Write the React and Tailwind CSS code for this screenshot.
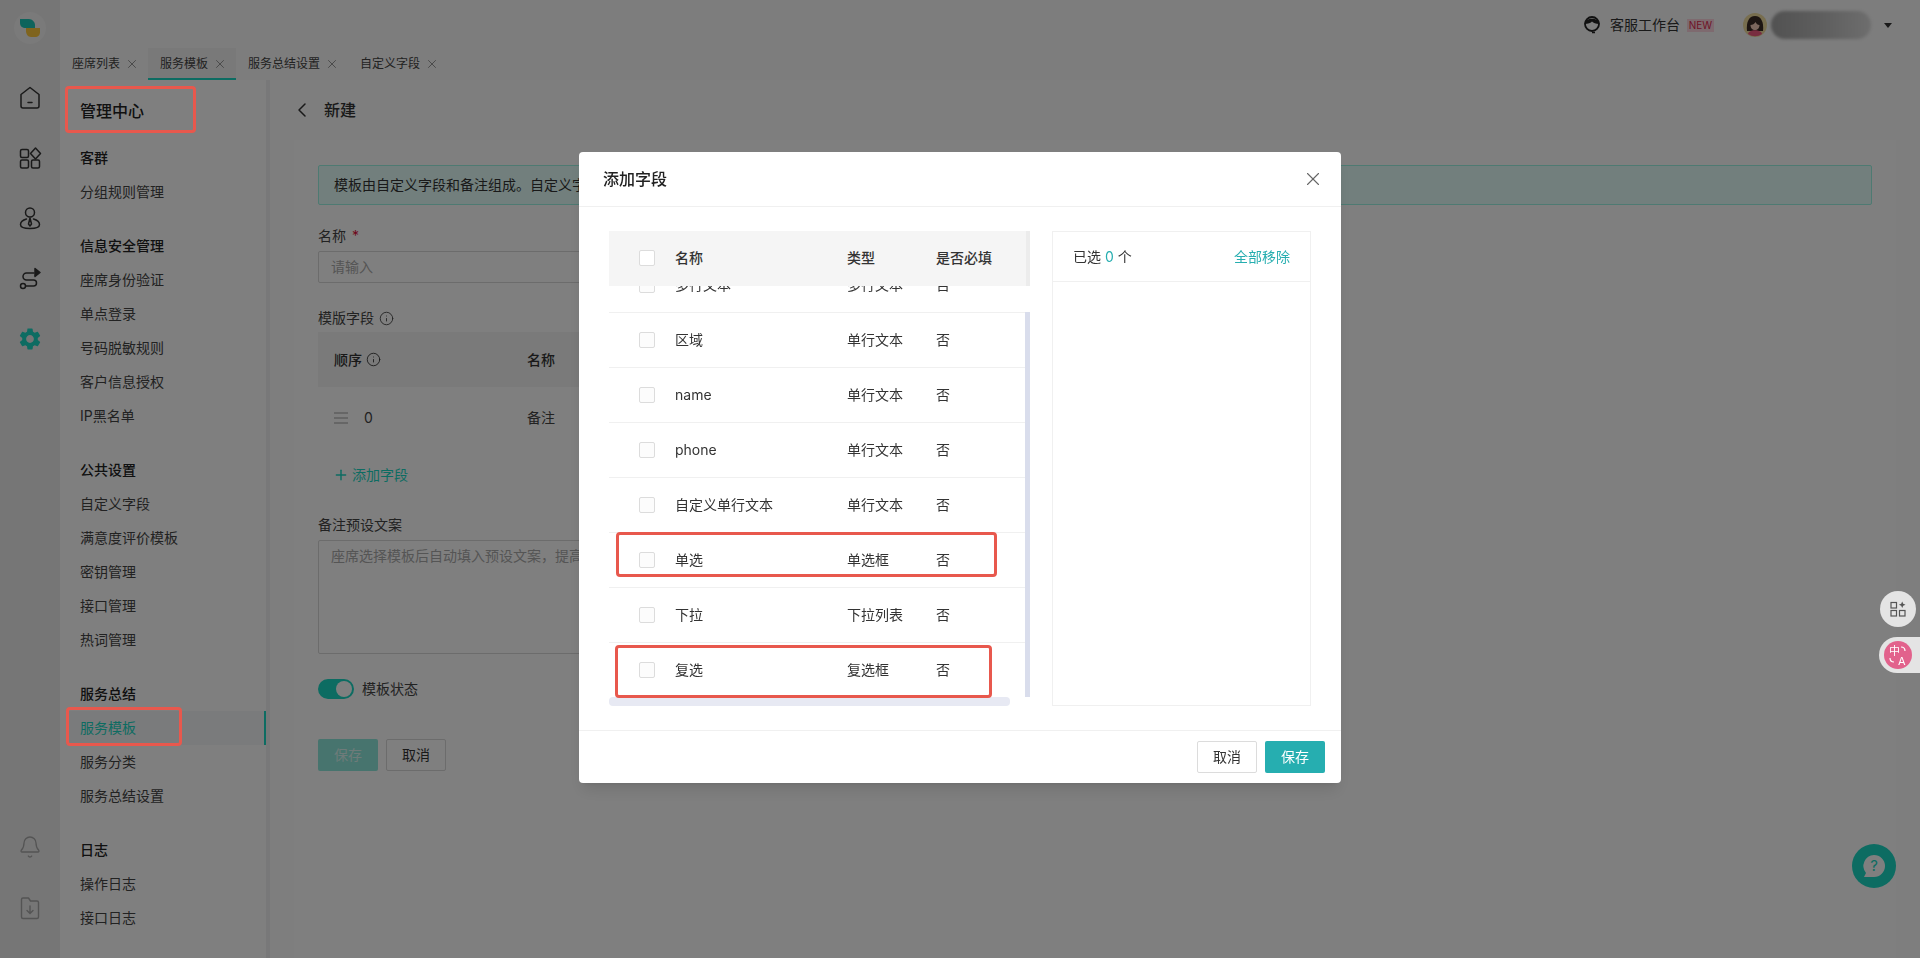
import React from "react";
import { X, ChevronLeft, Info, Plus, Bell } from "lucide-react";
import { MdSettings } from "react-icons/md";

const menu = [
  { title: "客群", items: ["分组规则管理"] },
  { title: "信息安全管理", items: ["座席身份验证", "单点登录", "号码脱敏规则", "客户信息授权", "IP黑名单"] },
  { title: "公共设置", items: ["自定义字段", "满意度评价模板", "密钥管理", "接口管理", "热词管理"] },
  { title: "服务总结", items: ["服务模板", "服务分类", "服务总结设置"] },
  { title: "日志", items: ["操作日志", "接口日志"] },
];

const tabs = ["座席列表", "服务模板", "服务总结设置", "自定义字段"];

const rows = [
  ["多行文本", "多行文本"],
  ["区域", "单行文本"],
  ["name", "单行文本"],
  ["phone", "单行文本"],
  ["自定义单行文本", "单行文本"],
  ["单选", "单选框"],
  ["下拉", "下拉列表"],
  ["复选", "复选框"],
];

const Logo = () => (
  <div className="w-8 h-8 rounded-full bg-[#f4f4f4] flex items-center justify-center">
    <svg width="22" height="20" viewBox="0 0 22 20">
      <path d="M1 1h9c3 0 6 3 6 6v3H7C3 10 1 8 1 5z" fill="#1cc8b8" />
      <path d="M7 10h14v4c0 3-2 5-5 5h-4c-3 0-5-3-5-6z" fill="#ffc83c" />
    </svg>
  </div>
);

const RailIcon = ({ children }) => (
  <svg width="24" height="24" viewBox="0 0 24 24" fill="none" stroke="#333" strokeWidth="1.5" strokeLinecap="round" strokeLinejoin="round">
    {children}
  </svg>
);

const Rail = () => (
  <div className="w-[60px] shrink-0 bg-[#ececec] flex flex-col items-center">
    <div className="h-[56px] flex items-center"><Logo /></div>
    <div className="mt-[30px] flex flex-col items-center gap-[36px]">
      <RailIcon>
        <path d="M12 1.5l9 7v11.5a2 2 0 0 1-2 2H5a2 2 0 0 1-2-2V8.5z" />
        <path d="M10 16.5h4" />
      </RailIcon>
      <RailIcon>
        <rect x="2.5" y="3.5" width="8" height="8" rx="1.5" />
        <path d="M17.5 2l5 5.5-5 5.5-5-5.5z" />
        <rect x="2.5" y="14" width="8" height="8" rx="1.5" />
        <rect x="13.5" y="14" width="8" height="8" rx="1.5" />
      </RailIcon>
      <RailIcon>
        <circle cx="12" cy="6.5" r="4.5" />
        <path d="M8.5 13C5 14 2.5 16 2.5 18.5c0 2.5 4 4 9.500 4s9.500-1.500 9.500-4c0-2.500-2.500-4.500-6-5.500" />
        <path d="M12 12l-1.500 6 1.500 2 1.500-2z" />
      </RailIcon>
      <RailIcon>
        <path d="M16 7H8.500a3.500 3.500 0 0 0 0 7h7a3 3 0 0 1 0 6H8" />
        <circle cx="5" cy="20" r="2.500" />
        <path d="M17 2.500l5 4-5 4z" fill="#333" />
      </RailIcon>
      <MdSettings className="w-[26px] h-[26px] text-[#1ad8c4]" />
    </div>
    <div className="mt-auto mb-[38px] flex flex-col items-center gap-[37px]">
      <Bell size={24} strokeWidth={1.3} className="text-[#a8a8a8]" />
      <svg width="24" height="24" viewBox="0 0 24 24" fill="none" stroke="#a8a8a8" strokeWidth="1.4" strokeLinecap="round" strokeLinejoin="round">
        <path d="M3.500 3.500a1.500 1.500 0 0 1 1.500-1.500h5.500l2 3H19a1.500 1.500 0 0 1 1.500 1.500V21a1.500 1.500 0 0 1-1.500 1.500H5A1.500 1.500 0 0 1 3.500 21z" />
        <path d="M12 10v7M9 14.500l3 3 3-3" />
      </svg>
    </div>
  </div>
);

const Header = () => (
  <div className="h-[48px] shrink-0 bg-[#fafafa] flex items-center justify-end pr-[28px] pt-[2px]">
    <svg width="18" height="18" viewBox="0 0 18 18" className="mr-[9px]">
      <circle cx="9" cy="8" r="7" fill="none" stroke="#222" strokeWidth="1.800" />
      <path d="M1.500 8c1-7 14-7 15 0-4 0-6-1-7.500-2.500C8 7 5 8 1.500 8z" fill="#222" />
      <path d="M9 16.500h3" stroke="#222" strokeWidth="1.500" />
    </svg>
    <span className="text-sm text-[#333]">客服工作台</span>
    <span className="ml-[7px] w-[27px] h-[13px] bg-[#fdd5de] text-[#e0284f] text-[10px] leading-[13px] text-center">NEW</span>
    <svg width="24" height="24" viewBox="0 0 24 24" className="ml-[29px]">
      <circle cx="12" cy="12" r="12" fill="#f0dc9e" />
      <path d="M4 18C3 9 6 3 12 3s9 6 8 15z" fill="#3a2a24" />
      <path d="M7.500 12c2 0 4-1 5-3 1 2 2 3 4 3 0 3-2 5-4.500 5S7.500 15 7.500 12z" fill="#f7cdb8" />
      <path d="M5 21c1-5 13-5 14 0a12 12 0 0 1-14 0z" fill="#f05a80" />
    </svg>
    <div className="ml-[4px] w-[100px] h-[28px] rounded-full bg-gradient-to-r from-[#a4a4a4] via-[#bcbcbc] to-[#dcdcdc] blur-[1.5px]" />
    <div className="ml-[13px] w-0 h-0 border-x-[4px] border-x-transparent border-t-[5px] border-t-[#333]" />
  </div>
);

const Tabs = () => (
  <div className="h-[32px] shrink-0 bg-[#fafafa] flex">
    {tabs.map((t) => {
      const active = t === "服务模板";
      return (
        <div key={t} className={"h-full px-3 pt-[2px] flex items-center gap-[5px] text-xs text-[#444] border-b-2 " + (active ? "bg-[#f2f2f2] border-[#1ad8c4]" : "border-transparent")}>
          <span>{t}</span>
          <X size={14} strokeWidth={1.5} className="text-[#888] -mr-[3px]" />
        </div>
      );
    })}
  </div>
);

const Sidebar = () => (
  <div className="w-[210px] shrink-0 bg-white border-r-[4px] border-[#f0f0f3] flex flex-col pl-[20px]">
    <div className="h-[61px] flex items-center text-base font-medium text-[#222]">管理中心</div>
    {menu.map((g) => (
      <div key={g.title} className="mb-[20px]">
        <div className="h-[34px] flex items-center text-sm font-medium text-[#222]">{g.title}</div>
        {g.items.map((i) => {
          const active = i === "服务模板";
          return (
            <div key={i} className={"h-[34px] flex items-center text-sm -ml-[14px] pl-[14px] " + (active ? "bg-[#f4f6f8] text-[#1ad8c4] border-r-2 border-[#1ad8c4]" : "text-[#444]")}>
              {i}
            </div>
          );
        })}
      </div>
    ))}
  </div>
);

const Main = () => (
  <div className="flex-1 min-w-0 bg-[#fcfcfc] flex flex-col">
    <div className="h-[60px] shrink-0 flex items-center pl-[20px] gap-[10px]">
      <ChevronLeft size={24} strokeWidth={1.5} className="text-[#333]" />
      <span className="text-base font-medium text-[#333]">新建</span>
    </div>
    <div className="flex-1 mx-[24px] bg-white px-[24px] pt-[25px] text-sm text-[#444]">
      <div className="h-[40px] border border-[#9cf5e4] bg-[#e4fffa] rounded-[2px] flex items-center px-[15px] text-[#333]">
        模板由自定义字段和备注组成。自定义字段可在自定义字段页面配置。
      </div>
      <div className="mt-[21px] h-[20px] flex items-center gap-[6px]">
        名称 <span className="text-[#e0103a]">*</span>
      </div>
      <div className="mt-[5px] w-[800px] h-[32px] border border-[#d8d8d8] rounded-[2px] flex items-center px-3 text-[#aaaaaa]">请输入</div>
      <div className="mt-[25px] h-[20px] flex items-center gap-[5px]">
        模版字段 <Info size={15} strokeWidth={1.4} />
      </div>
      <div className="mt-[4px] w-[800px]">
        <div className="h-[55px] bg-[#f4f4f4] flex items-center pl-[16px] font-medium text-[#333]">
          <div className="w-[193px] flex items-center gap-[4px]">顺序 <Info size={15} strokeWidth={1.4} /></div>
          <div>名称</div>
        </div>
        <div className="h-[62px] flex items-center pl-[16px]">
          <div className="w-[193px] flex items-center gap-[16px]">
            <svg width="14" height="12" viewBox="0 0 14 12" stroke="#999" strokeWidth="1"><path d="M0 1h14M0 6h14M0 11h14" /></svg>
            <span>0</span>
          </div>
          <div>备注</div>
        </div>
      </div>
      <div className="mt-[16px] h-[20px] pl-[15px] flex items-center gap-[3px] text-[#1ad8c4]">
        <Plus size={16} strokeWidth={2.2} /> 添加字段
      </div>
      <div className="mt-[30px] h-[20px] flex items-center">备注预设文案</div>
      <div className="mt-[5px] w-[800px] h-[114px] border border-[#d8d8d8] rounded-[2px] px-3 py-[5px] text-[#aaaaaa]">
        座席选择模板后自动填入预设文案，提高座席填写效率
      </div>
      <div className="mt-[25px] flex items-center gap-[8px]">
        <div className="w-[36px] h-[20px] rounded-full bg-[#1ad8c4] flex items-center justify-end pr-[2px]">
          <div className="w-[16px] h-[16px] rounded-full bg-white" />
        </div>
        模板状态
      </div>
      <div className="mt-[40px] flex gap-[8px]">
        <div className="w-[60px] h-[32px] rounded-[2px] bg-[#8fe8dc] text-white/70 flex items-center justify-center">保存</div>
        <div className="w-[60px] h-[32px] rounded-[2px] border border-[#d8d8d8] text-[#333] flex items-center justify-center">取消</div>
      </div>
    </div>
  </div>
);

const Checkbox = ({ soft }) => (
  <div className={"w-4 h-4 rounded-[2px] border border-[#dcdcdc] " + (soft ? "bg-[#fcfcfc]" : "bg-white")} />
);

const FieldTable = () => (
  <div className="w-[421px] shrink-0 relative">
    <div className="relative z-10 h-[55px] pb-[2px] bg-[#f5f5f5] border-r-4 border-[#ececec] grid grid-cols-[66px_172px_89px_1fr] items-center text-sm font-medium text-[#333]">
      <div className="pl-[30px]"><Checkbox /></div>
      <div>名称</div>
      <div>类型</div>
      <div>是否必填</div>
    </div>
    <div className="h-[411px] overflow-hidden">
      <div className="-mt-[28px]">
        {rows.map(([name, type]) => (
          <div key={name} className="h-[55px] w-[416px] border-b border-[#f0f0f0] grid grid-cols-[66px_172px_89px_1fr] items-center text-sm text-[#333]">
            <div className="pl-[30px]"><Checkbox soft /></div>
            <div>{name}</div>
            <div>{type}</div>
            <div>否</div>
          </div>
        ))}
      </div>
    </div>
    <div className="w-[401px] h-[9px] rounded-[4px] bg-[#e7e9f3]" />
    <div className="absolute right-0 top-[81px] w-[5px] h-[385px] bg-[#d9ddec]" />
  </div>
);

const Modal = () => (
  <div className="relative mx-auto mt-[152px] w-[762px] h-[631px] bg-white rounded-[4px] shadow-lg flex flex-col">
    <div className="h-[55px] shrink-0 border-b border-[#f0f0f0] flex items-center justify-between pl-[24px] pr-[17px]">
      <span className="text-base font-medium text-[#222]">添加字段</span>
      <X size={22} strokeWidth={1.2} className="text-[#666]" />
    </div>
    <div className="flex-1 flex gap-[22px] px-[30px] pt-[24px]">
      <FieldTable />
      <div className="w-[259px] h-[475px] border border-[#f0f0f0] text-sm text-[#333]">
        <div className="h-[50px] border-b border-[#f0f0f0] flex items-center justify-between pl-[20px] pr-[20px]">
          <span>已选 <span className="text-[#26aeb0]">0</span> 个</span>
          <span className="text-[#26aeb0]">全部移除</span>
        </div>
      </div>
    </div>
    <div className="h-[53px] shrink-0 border-t border-[#f0f0f0] flex items-start justify-end gap-[8px] pr-[16px] pt-[10px] text-sm">
      <div className="w-[60px] h-[32px] rounded-[2px] border border-[#dcdcdc] text-[#333] flex items-center justify-center">取消</div>
      <div className="w-[60px] h-[32px] rounded-[2px] bg-[#26aeb0] text-white flex items-center justify-center">保存</div>
    </div>
  </div>
);

const RedBox = ({ className }) => (
  <div className={"absolute border-[3px] border-[#e8584d] rounded-[4px] " + className} />
);

export default function App() {
  return (
    <div className="relative h-screen w-full overflow-hidden flex font-['Inter','Noto_Sans_CJK_SC',sans-serif]">
      <Rail />
      <div className="flex-1 min-w-0 flex flex-col">
        <Header />
        <Tabs />
        <div className="flex-1 min-h-0 flex">
          <Sidebar />
          <Main />
        </div>
      </div>

      {/* help bubble under the mask */}
      <div className="absolute left-[1852px] top-[844px] w-[44px] h-[44px] rounded-full bg-[#1ad8c4] flex items-center justify-center">
        <svg width="26" height="26" viewBox="0 0 26 26">
          <path d="M13 2a11 11 0 0 1 0 22H3l2-4A11 11 0 0 1 13 2z" fill="#fff" />
          <text x="13" y="18" textAnchor="middle" fontSize="15" fill="#1ad8c4">?</text>
        </svg>
      </div>

      <div className="fixed inset-0 bg-black/50">
        <Modal />
      </div>

      {/* annotations sit on top of the mask */}
      <RedBox className="left-[65px] top-[86px] w-[131px] h-[47px]" />
      <RedBox className="left-[66px] top-[707px] w-[116px] h-[39px]" />
      <RedBox className="left-[616px] top-[532px] w-[381px] h-[45px]" />
      <RedBox className="left-[615px] top-[645px] w-[377px] h-[53px]" />

      {/* browser extension widgets */}
      <div className="absolute left-[1880px] top-[591px] w-[36px] h-[36px] rounded-full bg-[#e4e4e4] flex items-center justify-center">
        <svg width="18" height="18" viewBox="0 0 18 18" fill="none" stroke="#555" strokeWidth="1.200">
          <rect x="2" y="2.500" width="5.500" height="5.500" />
          <rect x="2" y="10.500" width="5.500" height="5.500" />
          <rect x="10.500" y="10.500" width="5.500" height="5.500" />
          <path d="M13.200 1.500l1 2.300 2.300 1-2.300 1-1 2.300-1-2.300-2.300-1 2.300-1z" fill="#555" stroke="none" />
        </svg>
      </div>
      <div className="absolute left-[1879px] top-[637px] w-[41px] h-[36px] rounded-l-full bg-[#e4e4e4] flex items-center pl-[5px]">
        <div className="w-[28px] h-[28px] rounded-full bg-[#e2628c]">
          <svg width="28" height="28" viewBox="0 0 28 28" fill="none" stroke="#fff" strokeWidth="1.200">
            <text x="5" y="14" fontSize="11" fill="#fff" stroke="none">中</text>
            <text x="14" y="24" fontSize="11" fill="#fff" stroke="none">A</text>
            <path d="M17 6c2 0 4 1 4 4M6 17c0 2 1 4 4 4" />
          </svg>
        </div>
      </div>
    </div>
  );
}
